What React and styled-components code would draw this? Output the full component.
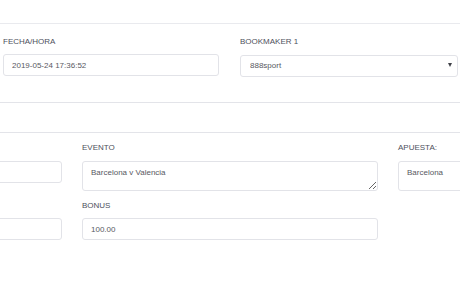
import React from "react";
import styled, { createGlobalStyle } from "styled-components";

const Global = createGlobalStyle`
  html, body { margin: 0; padding: 0; background: #fff; overflow: hidden; }
  body { font-family: "Liberation Sans", Arial, sans-serif; width: 460px; height: 295px; }
  * { box-sizing: border-box; }
`;

const Page = styled.div`
  width: 460px;
  overflow: hidden;
`;

const TopBar = styled.div`
  height: 24px;
  border-bottom: 1px solid #e9eaee;
`;

const Section = styled.div`
  padding: ${(p) => p.$pad || "12px 0 26px 3px"};
  border-bottom: ${(p) => (p.$noBorder ? "none" : "1px solid #e3e4e9")};
`;

const Spacer = styled.div`
  height: 30px;
  border-bottom: 1px solid #e3e4e9;
`;

const TopRow = styled.div`
  display: grid;
  grid-template-columns: 216px 218px;
  column-gap: 21px;
`;

const LowerGrid = styled.div`
  display: grid;
  grid-template-columns: 200px 296px 200px;
  column-gap: 20px;
  row-gap: 9px;
  margin-left: -138px;
  align-items: start;
`;

const Field = styled.div`
  display: flex;
  flex-direction: column;
`;

const Label = styled.label`
  font-size: 8px;
  line-height: 12px;
  height: 12px;
  color: #4d505c;
  text-transform: uppercase;
  margin-bottom: ${(p) => p.$mb || "6px"};
  white-space: nowrap;
`;

const Input = styled.input`
  height: 22px;
  width: 100%;
  border: 1px solid #e2e3e8;
  border-radius: 3px;
  padding: 0 0 0 8px;
  font-family: "Liberation Sans", Arial, sans-serif;
  font-size: 8px;
  color: #575962;
  outline: none;
  background: #fff;
`;

const TextArea = styled.textarea`
  height: 30px;
  width: 100%;
  border: 1px solid #e2e3e8;
  border-radius: 3px;
  padding: 5px 8px;
  font-family: "Liberation Sans", Arial, sans-serif;
  font-size: 8px;
  line-height: 11px;
  color: #575962;
  outline: none;
  resize: ${(p) => (p.$noResize ? "none" : "both")};
  margin: 0;
  display: block;
`;

const SelectWrap = styled.div`
  position: relative;
  height: 22px;
`;

const Select = styled.select`
  appearance: none;
  -webkit-appearance: none;
  height: 22px;
  width: 100%;
  border: 1px solid #e2e3e8;
  border-radius: 3px;
  padding: 0 0 0 9px;
  font-family: "Liberation Sans", Arial, sans-serif;
  font-size: 8px;
  color: #575962;
  background: #fff;
  outline: none;
`;

const Arrow = styled.span`
  position: absolute;
  right: 6px;
  top: 9px;
  width: 0;
  height: 0;
  border-left: 2.5px solid transparent;
  border-right: 2.5px solid transparent;
  border-top: 4px solid #3f4047;
  pointer-events: none;
`;

export default function App() {
  return (
    <Page>
      <Global />
      <TopBar />
      <Section>
        <TopRow>
          <Field>
            <Label>Fecha/Hora</Label>
            <Input defaultValue="2019-05-24 17:36:52" />
          </Field>
          <Field>
            <Label>Bookmaker 1</Label>
            <SelectWrap>
              <Select defaultValue="888sport">
                <option value="888sport">888sport</option>
              </Select>
              <Arrow />
            </SelectWrap>
          </Field>
        </TopRow>
      </Section>
      <Spacer />
      <Section $pad="9px 0 0 0" $noBorder>
        <LowerGrid>
          <Field>
            <Label $mb="7px" />
            <Input defaultValue="" aria-label="Cuota" />
          </Field>
          <Field>
            <Label $mb="7px">Evento</Label>
            <TextArea defaultValue="Barcelona v Valencia" />
          </Field>
          <Field>
            <Label $mb="7px">Apuesta:</Label>
            <TextArea $noResize defaultValue="Barcelona" />
          </Field>
          <Field>
            <Label />
            <Input defaultValue="" aria-label="Stake" />
          </Field>
          <Field>
            <Label>Bonus</Label>
            <Input defaultValue="100.00" />
          </Field>
          <Field />
        </LowerGrid>
      </Section>
    </Page>
  );
}
